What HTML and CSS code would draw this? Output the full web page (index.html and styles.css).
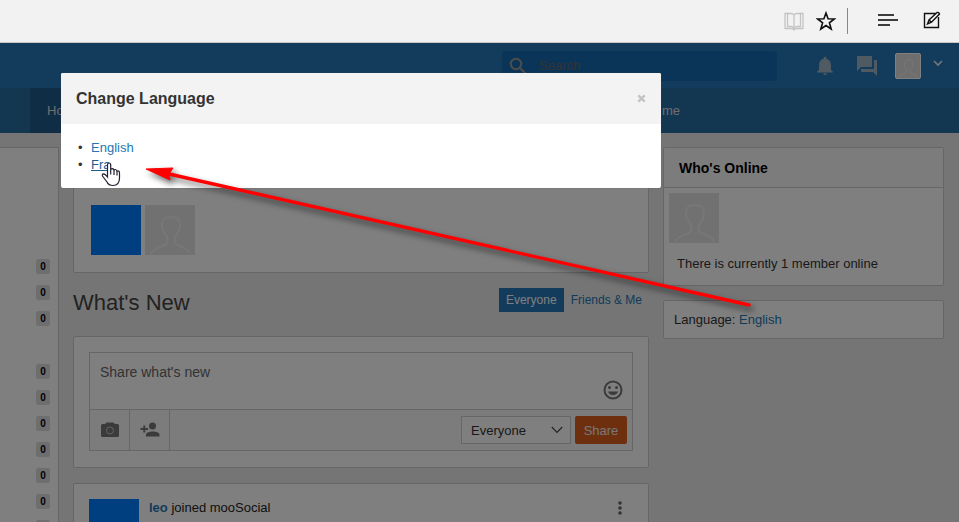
FILE: index.html
```
<!DOCTYPE html>
<html lang="en">
<head>
  <meta charset="UTF-8">
  <title>mooSocial</title>
  <link rel="stylesheet" href="styles.css">
</head>
<body>

  <svg class="defs" width="0" height="0">
    <symbol id="person" viewBox="0 0 50 50">
      <path d="M6 49c1-6 12-7 15-10 2-2 2-6 0-9-3-3-4-7-4-10 0-6 3-8 9-8s9 2 9 8c0 3-1 7-4 10-2 3-2 7 0 9 3 3 13 4 14 10" fill="none" stroke="#efefef" stroke-width="2"/>
    </symbol>
  </svg>

  <div class="browser-bar">
    <svg class="book" width="20" height="20" viewBox="0 0 20 20" fill="none" stroke="#c4c4c4">
      <path d="M1 2.500H7Q9 2.500 10 4Q11 2.500 13 2.500H19V17.500H13Q11 17.500 10 19Q9 17.500 7 17.500H1Z M10 4V18 M3.500 1.500V15.500H7.500L10 17L12.500 15.500H16.500V1.500" stroke-width="1.300"/>
    </svg>
    <svg class="star" width="20" height="20" viewBox="0 0 20 20" fill="none" stroke="#111" stroke-width="1.600">
      <path d="M10 2L12.100 7.700L18.300 8L13.400 11.800L15.200 18L10 14.500L4.800 18L6.600 11.800L1.700 8L7.900 7.700Z"/>
    </svg>
    <span class="divider"></span>
    <svg class="lines" width="20" height="12" viewBox="0 0 20 12" stroke="#000" stroke-width="1.400">
      <path d="M0 1H16M0 6H20M0 11H12"/>
    </svg>
    <svg class="note" width="18" height="18" viewBox="0 0 18 18" fill="none" stroke="#111" stroke-width="1.400">
      <path d="M13 2.500H1.500V16.500H15.500V6M4.500 13L6 9L14 1.500Q15.700 .8 16.500 3L8.500 11.200ZM6 9L8.500 11.200"/>
    </svg>
  </div>

  <div class="site">
    <header class="topbar">
      <label class="search">
        <svg width="18" height="18" viewBox="0 0 18 18" fill="none" stroke="#999" stroke-width="2">
          <circle cx="7" cy="7" r="5.200"/><path d="M11 11L16.500 16.500"/>
        </svg>
        <input type="text" placeholder="Search" aria-label="Search">
      </label>
      <svg class="bell" width="22" height="22" viewBox="0 0 24 24" fill="#9fb4c6">
        <path d="M12 22a2 2 0 0 0 2-2h-4a2 2 0 0 0 2 2zm6.500-6v-5.500c0-3.100-2.100-5.600-5-6.300V3.500a1.500 1.500 0 0 0-3 0v.7c-2.900.7-5 3.200-5 6.300V16l-2 2v1h17v-1z"/>
      </svg>
      <svg class="chat" width="24" height="24" viewBox="0 0 24 24" fill="#9fb4c6">
        <path d="M21 6h-2v9H6v2c0 .6.400 1 1 1h11l4 4V7c0-.6-.4-1-1-1zm-4 6V3c0-.6-.4-1-1-1H3c-.6 0-1 .4-1 1v14l4-4h10c.6 0 1-.4 1-1z"/>
      </svg>
      <svg class="me" width="24" height="24"><use href="#person"/></svg>
      <svg class="caret" width="10" height="8" viewBox="0 0 10 8" fill="none" stroke="#eee" stroke-width="1.600"><path d="M1 2L5 6L9 2"/></svg>
    </header>

    <nav class="menu">
      <a class="active" href="#">Home</a>
      <a href="#">me</a>
    </nav>

    <div class="columns">
      <aside class="left">
        <ul>
          <li>0</li>
          <li>0</li>
          <li>0</li>
        </ul>
        <ul>
          <li>0</li>
          <li>0</li>
          <li>0</li>
          <li>0</li>
          <li>0</li>
          <li>0</li>
          <li></li>
        </ul>
      </aside>

      <main>
        <section class="card members">
          <span class="avatar blue"></span>
          <svg class="avatar" width="50" height="50"><use href="#person"/></svg>
        </section>

        <div class="feed-head">
          <h1>What's New</h1>
          <a class="current" href="#">Everyone</a>
          <a href="#">Friends &amp; Me</a>
        </div>

        <form class="card post">
          <div class="post-box">
            <div class="post-text">
              <textarea placeholder="Share what's new" aria-label="Share what's new"></textarea>
              <svg width="20" height="20" viewBox="0 0 20 20" fill="#777">
                <circle cx="10" cy="10" r="8.500" fill="none" stroke="#777" stroke-width="2"/>
                <circle cx="6.500" cy="7.500" r="1.500"/><circle cx="13.500" cy="7.500" r="1.500"/>
                <path d="M5 11.500H15C14 16.200 6 16.200 5 11.500Z"/>
              </svg>
            </div>
            <div class="post-tools">
              <button type="button" class="tool" aria-label="Add photo">
                <svg width="20" height="20" viewBox="0 0 20 20" fill="#777">
                  <path d="M6.500 2.500H13.500L15 4H17.500Q19 4 19 5.500V15.500Q19 17 17.500 17H2.500Q1 17 1 15.500V5.500Q1 4 2.500 4H5Z"/>
                  <circle cx="10" cy="10.500" r="3.500" fill="none" stroke="#c4c4c4"/>
                </svg>
              </button>
              <button type="button" class="tool" aria-label="Tag people">
                <svg width="20" height="20" viewBox="0 0 20 20" fill="#777">
                  <circle cx="12.500" cy="6" r="3.500"/>
                  <path d="M6 16.500V14.500C6 10.500 19.500 10.500 19.500 14.500V16.500ZM3.300 5.500H5.200V8H8V9.900H5.200V12.500H3.300V9.900H.5V8H3.300Z"/>
                </svg>
              </button>
              <select aria-label="Privacy">
                <option>Everyone</option>
              </select>
              <svg class="select-arrow" width="12" height="8" viewBox="0 0 12 8" fill="none" stroke="#444" stroke-width="1.100"><path d="M.8 1L6 6.500L11.200 1"/></svg>
              <button type="submit" class="share">Share</button>
            </div>
          </div>
        </form>

        <article class="card story">
          <span class="avatar blue"></span>
          <p><a href="#">leo</a> joined mooSocial</p>
          <svg width="4" height="14" viewBox="0 0 4 14" fill="#666">
            <circle cx="2" cy="2" r="1.800"/><circle cx="2" cy="7" r="1.800"/><circle cx="2" cy="12" r="1.800"/>
          </svg>
        </article>
      </main>

      <aside class="right">
        <section class="card online">
          <h2>Who's Online</h2>
          <svg class="avatar" width="50" height="50"><use href="#person"/></svg>
          <p>There is currently 1 member online</p>
        </section>
        <section class="card language">Language: <a href="#">English</a></section>
      </aside>
    </div>

    <div class="overlay"></div>
  </div>

  <div class="modal" role="dialog" aria-labelledby="modal-title">
    <div class="modal-header">
      <h2 id="modal-title">Change Language</h2>
      <button type="button" aria-label="Close">
        <svg width="9" height="9" viewBox="0 0 10 10" stroke="#c3c3c3" stroke-width="2.500"><path d="M1.500 1.500L8.500 8.500M8.500 1.500L1.500 8.500"/></svg>
      </button>
    </div>
    <ul>
      <li><a href="#">English</a></li>
      <li><a class="hover" href="#">Fra</a></li>
    </ul>
  </div>

  <svg class="arrow" width="620" height="175" viewBox="0 0 620 175">
    <path d="M27 30L607 161" stroke="#f00" stroke-width="3.400" stroke-linecap="round"/>
    <path d="M4 25L31 24L27 30L28 36Z" fill="#f00" stroke="#f00"/>
  </svg>

  <svg class="cursor" width="20" height="25" viewBox="0 0 20 25">
    <path d="M6.500 15V3Q6.500 1 8 1Q9.700 1 9.700 3V8.500Q9.700 6.500 11.300 6.600Q13 6.700 13 9Q13 7.300 14.500 7.500Q16 7.700 16 10Q16.200 8.500 17.300 8.800Q18.500 9 18.500 11V16Q18.500 23.500 12 23.500Q7.500 23.500 6 20L1.500 14Q.8 12 2.500 11.800Q4 11.800 6.500 15ZM9.700 8V12.500M13 9V13M16 10V13.500" fill="#fff" stroke="#223" stroke-width="1.200"/>
  </svg>

</body>
</html>
```

FILE: styles.css
```
* {
  box-sizing: border-box;
}
body {
  margin: 0;
  height: 100vh;
  overflow: hidden;
  display: flex;
  flex-direction: column;
  position: relative;
  font-family: "Liberation Sans", Arial, sans-serif;
  font-size: 13px;
  line-height: 17px;
  color: #333;
}
a {
  color: #2476b5;
  text-decoration: none;
}
h1, h2, p, ul {
  margin: 0;
  padding: 0;
}
ul {
  list-style: none;
}
svg {
  display: block;
  flex: none;
}
button, input, select, textarea {
  font: inherit;
}
.defs {
  position: absolute;
}

/* browser toolbar */
.browser-bar {
  flex: none;
  height: 43px;
  padding-right: 18px;
  display: flex;
  align-items: center;
  justify-content: flex-end;
  background: #f2f2f2;
  border-bottom: 1px solid #c8c8c8;
}
.star {
  margin: 0 11px 0 12px;
}
.divider {
  width: 1px;
  height: 26px;
  margin-right: 30px;
  background: #888;
}
.lines {
  margin: 0 25px 3px 0;
}
.note {
  margin-bottom: 2px;
}

/* site */
.site {
  flex: 1;
  min-height: 0;
  position: relative;
  overflow: hidden;
  background: #eaeaea;
}
.overlay {
  position: absolute;
  inset: 0;
  background: rgba(0, 0, 0, 0.5);
}
.topbar {
  height: 45px;
  padding-right: 16px;
  display: flex;
  align-items: center;
  justify-content: flex-end;
  background: #2678b9;
}
.search {
  width: 275px;
  height: 30px;
  padding-left: 7px;
  display: flex;
  align-items: center;
  gap: 10px;
  background: #176bb0;
  border-radius: 3px;
}
.search input {
  width: 200px;
  border: 0;
  background: none;
}
.search input::placeholder {
  color: #666;
}
.bell {
  margin-left: 37px;
}
.chat {
  margin: 0 16px 0 19px;
}
.me {
  width: 26px;
  height: 26px;
  background: #ddd;
  border: 1px solid #fff;
  border-radius: 2px;
}
.caret {
  margin: 0 0 6px 12px;
}
.menu {
  height: 45px;
  padding-left: 30px;
  display: flex;
  gap: 562px;
  background: #276da2;
}
.menu a {
  padding: 14px 0;
  color: #ddd;
}
.menu .active {
  width: 70px;
  padding-left: 17px;
  background: #205a8c;
}
.columns {
  padding: 14px 15px 0 0;
  display: grid;
  grid-template-columns: 59px 1fr 281px;
  gap: 14px;
}
.card {
  background: #fff;
  border: 1px solid #ccc;
  border-radius: 2px;
}
.avatar {
  width: 50px;
  height: 50px;
  background: #e2e2e2;
}
.avatar.blue {
  background: #007fff;
}
.left {
  height: 400px;
  padding: 111px 8px 0 0;
  background: #fff;
  border: solid #ccc;
  border-width: 1px 1px 0 0;
  border-radius: 0 2px 0 0;
}
.left ul {
  margin-bottom: 38px;
}
.left li {
  width: 14px;
  height: 15px;
  margin: 0 0 11px auto;
  background: #ddd;
  border-radius: 2px;
  font-size: 10px;
  font-weight: bold;
  line-height: 15px;
  text-align: center;
  color: #000;
}
.left li:last-child {
  margin-bottom: 0;
}
.members {
  height: 126px;
  padding: 57px 17px 0;
  display: flex;
  gap: 4px;
}
.feed-head {
  height: 63px;
  padding-bottom: 10px;
  display: flex;
  align-items: center;
}
.feed-head h1 {
  margin-right: auto;
  padding-top: 6px;
  font-size: 22px;
  font-weight: normal;
  line-height: 30px;
  color: #444;
}
.feed-head a {
  padding: 0 7px;
  font-size: 12px;
  line-height: 24px;
}
.feed-head .current {
  color: #fff;
  background: #2678b9;
}
.post {
  height: 132px;
  padding: 15px;
}
.post-box {
  border: 1px solid #ccc;
}
.post-text {
  height: 57px;
  padding: 9px;
  display: flex;
  align-items: flex-end;
  border-bottom: 1px solid #ccc;
}
.post-text textarea {
  flex: 1;
  height: 36px;
  padding: 0 1px;
  border: 0;
  resize: none;
  font-size: 14px;
}
.post-text textarea::placeholder {
  color: #666;
}
.post-tools {
  height: 40px;
  padding-right: 5px;
  display: flex;
  align-items: center;
  background: #f8f8f8;
}
.tool {
  width: 40px;
  height: 40px;
  padding: 0 10px;
  background: none;
  border: 0;
  border-right: 1px solid #ccc;
}
.post-tools select {
  appearance: none;
  width: 110px;
  height: 28px;
  margin-left: auto;
  padding: 0 9px;
  color: #333;
  background: #fff;
  border: 1px solid #ccc;
}
.select-arrow {
  margin: 0 12px 0 -20px;
  pointer-events: none;
}
.share {
  width: 52px;
  height: 28px;
  padding: 0;
  color: #eee;
  background: #dd5e1e;
  border: 0;
  border-radius: 2px;
}
.story {
  margin-top: 15px;
  padding: 15px;
  display: flex;
  gap: 10px;
  color: #222;
}
.story p {
  flex: 1;
}
.story p a {
  font-weight: bold;
}
.story svg {
  margin: 2px 11px 0 0;
}
.online {
  height: 139px;
}
.online h2 {
  height: 40px;
  padding-left: 15px;
  background: #f8f8f8;
  border-bottom: 1px solid #ccc;
  font-size: 14px;
  line-height: 40px;
  color: #000;
}
.online .avatar {
  margin: 5px;
}
.online p {
  padding: 7px 13px;
}
.language {
  margin-top: 14px;
  padding: 10px;
}

/* language dialog */
.modal {
  position: absolute;
  top: 73px;
  left: 61px;
  width: 600px;
  background: #fff;
  border-radius: 2px;
  box-shadow: 0 0 1px #555;
}
.modal-header {
  height: 51px;
  padding: 0 15px;
  display: flex;
  align-items: center;
  justify-content: space-between;
  background: #f3f3f3;
  border-radius: 2px 2px 0 0;
}
.modal-header h2 {
  font-size: 16px;
}
.modal-header button {
  padding: 0;
  background: none;
  border: 0;
}
.modal ul {
  padding: 15px 15px 15px 30px;
}
.modal li::before {
  content: "•";
  float: left;
  margin-left: -13px;
}
.modal .hover {
  color: #1c5b8e;
  text-decoration: underline;
}

/* pointer and arrow drawn over the page */
.arrow {
  position: absolute;
  top: 144px;
  left: 142px;
  filter: drop-shadow(3px 4px 3px rgba(0, 0, 0, 0.6));
}
.cursor {
  position: absolute;
  top: 162px;
  left: 101px;
}
```
